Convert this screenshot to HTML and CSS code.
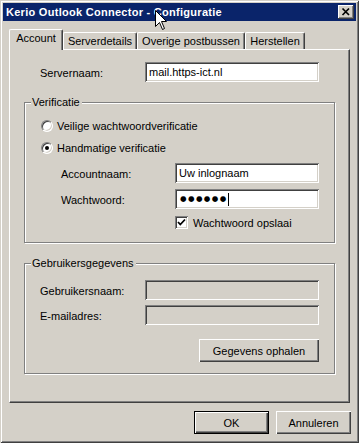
FILE: index.html
```html
<!DOCTYPE html>
<html>
<head>
    <link rel="stylesheet" href="styles.css">
</head>
<body>
    <div class="window">
        <div class="titlebar">
            <span class="title">Kerio Outlook Connector - Configuratie</span>
            <span class="close">
                <svg width="16" height="14" viewBox="0 0 16 14">
                    <path d="M4.5 3.5 L11 10 M11 3.5 L4.5 10" stroke="#000" stroke-width="1.7" fill="none"/>
                </svg>
            </span>
        </div>

        <div class="dialog">
            <div class="tabs">
                <div class="tab active tab-account">Account</div>
                <div class="tab tab-server">Serverdetails</div>
                <div class="tab tab-other">Overige postbussen</div>
                <div class="tab tab-restore">Herstellen</div>
            </div>

            <div class="panel">
                <div class="row server-row">
                    <label class="lbl">Servernaam:</label>
                    <div class="edit wide">mail.https-ict.nl</div>
                </div>

                <div class="group verif">
                    <span class="legend">Verificatie</span>
                    <div class="option first">
                        <span class="radio"></span>
                        <span>Veilige wachtwoordverificatie</span>
                    </div>
                    <div class="option second">
                        <span class="radio checked"></span>
                        <span>Handmatige verificatie</span>
                    </div>
                    <div class="row sub account-row">
                        <label class="lbl sub-lbl">Accountnaam:</label>
                        <div class="edit narrow">Uw inlognaam</div>
                    </div>
                    <div class="row sub pw-row">
                        <label class="lbl sub-lbl">Wachtwoord:</label>
                        <div class="edit narrow pw"><span class="dots">●●●●●●</span><span class="caret"></span></div>
                    </div>
                    <div class="save-row">
                        <span class="check">
                            <svg width="11" height="11" viewBox="0 0 11 11">
                                <path d="M2 5 L4.3 7.5 L9 2.5" stroke="#000" stroke-width="1.8" fill="none"/>
                            </svg>
                        </span>
                        <span>Wachtwoord opslaai</span>
                    </div>
                </div>

                <div class="group user">
                    <span class="legend">Gebruikersgegevens</span>
                    <div class="row user-row first">
                        <label class="lbl">Gebruikersnaam:</label>
                        <div class="edit wide disabled"></div>
                    </div>
                    <div class="row user-row second">
                        <label class="lbl">E-mailadres:</label>
                        <div class="edit wide disabled"></div>
                    </div>
                    <button class="btn fetch">Gegevens ophalen</button>
                </div>
            </div>

            <div class="buttons">
                <button class="btn default">OK</button>
                <button class="btn">Annuleren</button>
            </div>
        </div>

        <svg class="cursor" width="13" height="21" viewBox="0 0 13 21">
            <path d="M0.5 0.5 L0.5 16.5 L4.5 12.5 L7.5 19.5 L9.5 18.5 L6.5 11.5 L11.5 11.5 Z" fill="#fff" stroke="#000" stroke-width="1"/>
        </svg>
    </div>
</body>
</html>
```

FILE: styles.css
```css
* {
    box-sizing: border-box;
}

body {
    margin: 0;
    background: #d4d0c8;
    font-family: "Liberation Sans", Arial, sans-serif;
    font-size: 11px;
    color: #000;
}

.window {
    position: relative;
    width: 359px;
    height: 443px;
    padding: 3px;
    background: #d4d0c8;
    box-shadow: inset 1px 1px 0 #d4d0c8, inset -1px -1px 0 #404040,
                inset 2px 2px 0 #fff, inset -2px -2px 0 #808080;
}

.titlebar {
    height: 18px;
    background: #0a246a;
    display: flex;
    align-items: center;
    justify-content: space-between;
    padding: 0 2px;
}

.title {
    color: #fff;
    font-weight: bold;
    padding-left: 1px;
    letter-spacing: 0.28px;
}

.close {
    width: 16px;
    height: 14px;
    display: block;
    background: #d4d0c8;
    box-shadow: inset -1px -1px 0 #404040, inset 1px 1px 0 #fff, inset -2px -2px 0 #808080;
}

.close svg {
    display: block;
}

.dialog {
    padding: 8px 6px 0 6px;
}

/* tabs */
.tabs {
    display: flex;
    align-items: flex-end;
    height: 20px;
}

.tab {
    height: 17px;
    line-height: 16px;
    text-align: center;
    border-top: 1px solid #fff;
    border-left: 1px solid #fff;
    border-right: 1px solid #404040;
    border-top-left-radius: 2px;
    border-top-right-radius: 2px;
    box-shadow: inset -1px 0 0 #808080;
}

.tab.active {
    height: 21px;
    line-height: 17px;
    margin-bottom: -1px;
    position: relative;
    z-index: 1;
    background: #d4d0c8;
}

.tab-account { width: 54px; }
.tab-server { width: 74px; }
.tab-other { width: 108px; }
.tab-restore { width: 60px; }

.panel {
    width: 341px;
    height: 354px;
    border-top: 1px solid #fff;
    border-left: 1px solid #fff;
    border-right: 1px solid #404040;
    border-bottom: 1px solid #404040;
    box-shadow: inset -1px -1px 0 #808080;
    padding: 12px 0 0 14px;
}

/* rows */
.row {
    display: flex;
    align-items: center;
    height: 20px;
}

.lbl {
    width: 105px;
    padding-top: 2px;
}

.server-row {
    padding-left: 16px;
}

.edit {
    height: 20px;
    background: #fff;
    padding: 0 0 0 4px;
    line-height: 20px;
    white-space: nowrap;
    box-shadow: inset 1px 1px 0 #808080, inset -1px -1px 0 #fff,
                inset 2px 2px 0 #404040, inset -2px -2px 0 #d4d0c8;
}

.edit.wide { width: 174px; }
.edit.narrow { width: 144px; }
.edit.disabled { background: #d4d0c8; }

.pw {
    display: flex;
    align-items: center;
}

.dots {
    font-family: "DejaVu Sans", sans-serif;
    font-size: 7.5px;
    letter-spacing: 1.4px;
    padding-left: 1px;
}

.caret {
    width: 1px;
    height: 13px;
    background: #000;
    margin-left: 0;
}

/* group boxes */
.group {
    width: 311px;
    border: 1px solid #808080;
    box-shadow: 1px 1px 0 #fff, inset 1px 1px 0 #fff;
    display: flex;
    flex-direction: column;
    align-items: flex-start;
}

.verif {
    margin-top: 20px;
    height: 141px;
}

.user {
    margin-top: 20px;
    height: 111px;
}

.legend {
    margin: -7px 0 0 6px;
    padding: 0 2px 0 1px;
    line-height: 13px;
    background: #d4d0c8;
}

.option {
    display: flex;
    align-items: center;
    height: 13px;
    padding-left: 16px;
    gap: 4px;
}

.option.first { margin-top: 10px; }
.option.second { margin-top: 9px; }

.radio {
    width: 12px;
    height: 12px;
    border-radius: 50%;
    border: 1px solid;
    border-color: #808080 #fff #fff #808080;
    background: #fff;
    box-shadow: inset 1px 1px 0 #404040, inset -1px -1px 0 #d4d0c8;
    display: flex;
    align-items: center;
    justify-content: center;
}

.radio.checked::after {
    content: "";
    width: 4px;
    height: 4px;
    border-radius: 50%;
    background: #000;
}

.sub {
    padding-left: 36px;
}

.sub-lbl {
    width: 114px;
}

.account-row { margin-top: 9px; }
.pw-row { margin-top: 6px; }

.save-row {
    display: flex;
    align-items: center;
    gap: 5px;
    margin: 7px 0 0 150px;
    height: 13px;
}

.check {
    width: 13px;
    height: 13px;
    background: #fff;
    box-shadow: inset 1px 1px 0 #808080, inset -1px -1px 0 #fff,
                inset 2px 2px 0 #404040, inset -2px -2px 0 #d4d0c8;
    padding: 1px;
}

.check svg {
    display: block;
}

.user-row {
    padding-left: 15px;
}

.user-row.first { margin-top: 10px; }
.user-row.second { margin-top: 5px; }

/* buttons */
.btn {
    font-family: inherit;
    font-size: 11px;
    color: #000;
    height: 23px;
    width: 75px;
    border: 0;
    padding: 0;
    background: #d4d0c8;
    box-shadow: inset 1px 1px 0 #fff, inset -1px -1px 0 #404040, inset -2px -2px 0 #808080;
}

.btn.fetch {
    width: 120px;
    margin: 14px 0 0 174px;
}

.btn.default {
    border: 1px solid #000;
}

.buttons {
    display: flex;
    justify-content: flex-end;
    gap: 7px;
    margin-top: 8px;
    margin-right: -1px;
}

.cursor {
    position: absolute;
    left: 155px;
    top: 10px;
}
```
